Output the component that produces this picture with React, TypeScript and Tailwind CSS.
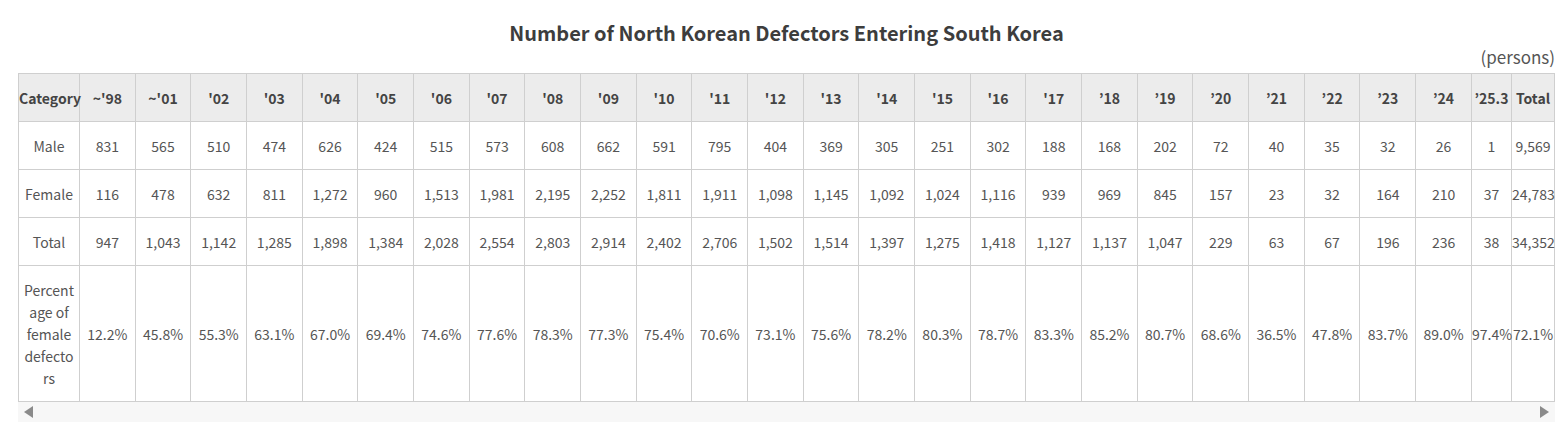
const headers = [
  "~'98", "~'01", "'02", "'03", "'04", "'05", "'06", "'07", "'08", "'09", "'10", "'11", "'12",
  "'13", "'14", "'15", "'16", "'17", "’18", "’19", "’20", "’21", "’22", "’23", "’24", "’25.3", "Total",
];

const rows: { label: string; values: string[] }[] = [
  {
    label: "Male",
    values: ["831", "565", "510", "474", "626", "424", "515", "573", "608", "662", "591", "795", "404", "369", "305", "251", "302", "188", "168", "202", "72", "40", "35", "32", "26", "1", "9,569"],
  },
  {
    label: "Female",
    values: ["116", "478", "632", "811", "1,272", "960", "1,513", "1,981", "2,195", "2,252", "1,811", "1,911", "1,098", "1,145", "1,092", "1,024", "1,116", "939", "969", "845", "157", "23", "32", "164", "210", "37", "24,783"],
  },
  {
    label: "Total",
    values: ["947", "1,043", "1,142", "1,285", "1,898", "1,384", "2,028", "2,554", "2,803", "2,914", "2,402", "2,706", "1,502", "1,514", "1,397", "1,275", "1,418", "1,127", "1,137", "1,047", "229", "63", "67", "196", "236", "38", "34,352"],
  },
];

const percent = ["12.2%", "45.8%", "55.3%", "63.1%", "67.0%", "69.4%", "74.6%", "77.6%", "78.3%", "77.3%", "75.4%", "70.6%", "73.1%", "75.6%", "78.2%", "80.3%", "78.7%", "83.3%", "85.2%", "80.7%", "68.6%", "36.5%", "47.8%", "83.7%", "89.0%", "97.4%", "72.1%"];

export default function App() {
  return (
    <div
      className="w-[1566px] h-[440px] bg-white text-[#555]"
      style={{ fontFamily: '"Noto Sans CJK KR", "Noto Sans", sans-serif' }}
    >
      <div className="ml-[18px] w-[1537px]">
        <h2 className="pt-[18px] h-[48px] text-center text-[20px] leading-[30px] font-bold text-[#3d3d3d]">
          Number of North Korean Defectors Entering South Korea
        </h2>
        <p className="h-[25px] text-right text-[17px] leading-[18px] text-[#555]">(persons)</p>

        <div>
          <table className="w-[1537px] table-fixed border-collapse text-[14px] leading-[22px]">
            <colgroup>
              <col className="w-[61px]" />
              {headers.slice(0, 25).map((h) => (
                <col key={h} />
              ))}
              <col className="w-[40px]" />
              <col className="w-[43px]" />
            </colgroup>
            <thead>
              <tr className="bg-[#ececec] h-[48px]">
                <th className="border border-[#cfcfcf] font-bold text-[#444] px-0 whitespace-nowrap">Category</th>
                {headers.map((h) => (
                  <th key={h} className="border border-[#cfcfcf] font-bold text-[#444] px-0 whitespace-nowrap">
                    {h}
                  </th>
                ))}
              </tr>
            </thead>
            <tbody>
              {rows.map((r) => (
                <tr key={r.label} className="h-[48px]">
                  <td className="border border-[#cfcfcf] text-center">{r.label}</td>
                  {r.values.map((v, i) => (
                    <td key={i} className="border border-[#cfcfcf] text-center px-0 whitespace-nowrap">
                      {v}
                    </td>
                  ))}
                </tr>
              ))}
              <tr className="h-[136px]">
                <td className="border border-[#cfcfcf] text-center px-[4px] break-all">
                  Percent
                  <br />
                  age of
                  <br />
                  female
                  <br />
                  defecto
                  <br />
                  rs
                </td>
                {percent.map((v, i) => (
                  <td key={i} className="border border-[#cfcfcf] text-center px-0 whitespace-nowrap">
                    {v}
                  </td>
                ))}
              </tr>
            </tbody>
          </table>

          {/* scrollbar track */}
          <div className="flex h-[20px] items-center justify-between bg-[#f7f7f7] px-[6px]">
            <span className="h-0 w-0 border-y-[6px] border-r-[9px] border-y-transparent border-r-[#8a8a8a]" />
            <span className="h-0 w-0 border-y-[6px] border-l-[9px] border-y-transparent border-l-[#8a8a8a]" />
          </div>
        </div>
      </div>
    </div>
  );
}
